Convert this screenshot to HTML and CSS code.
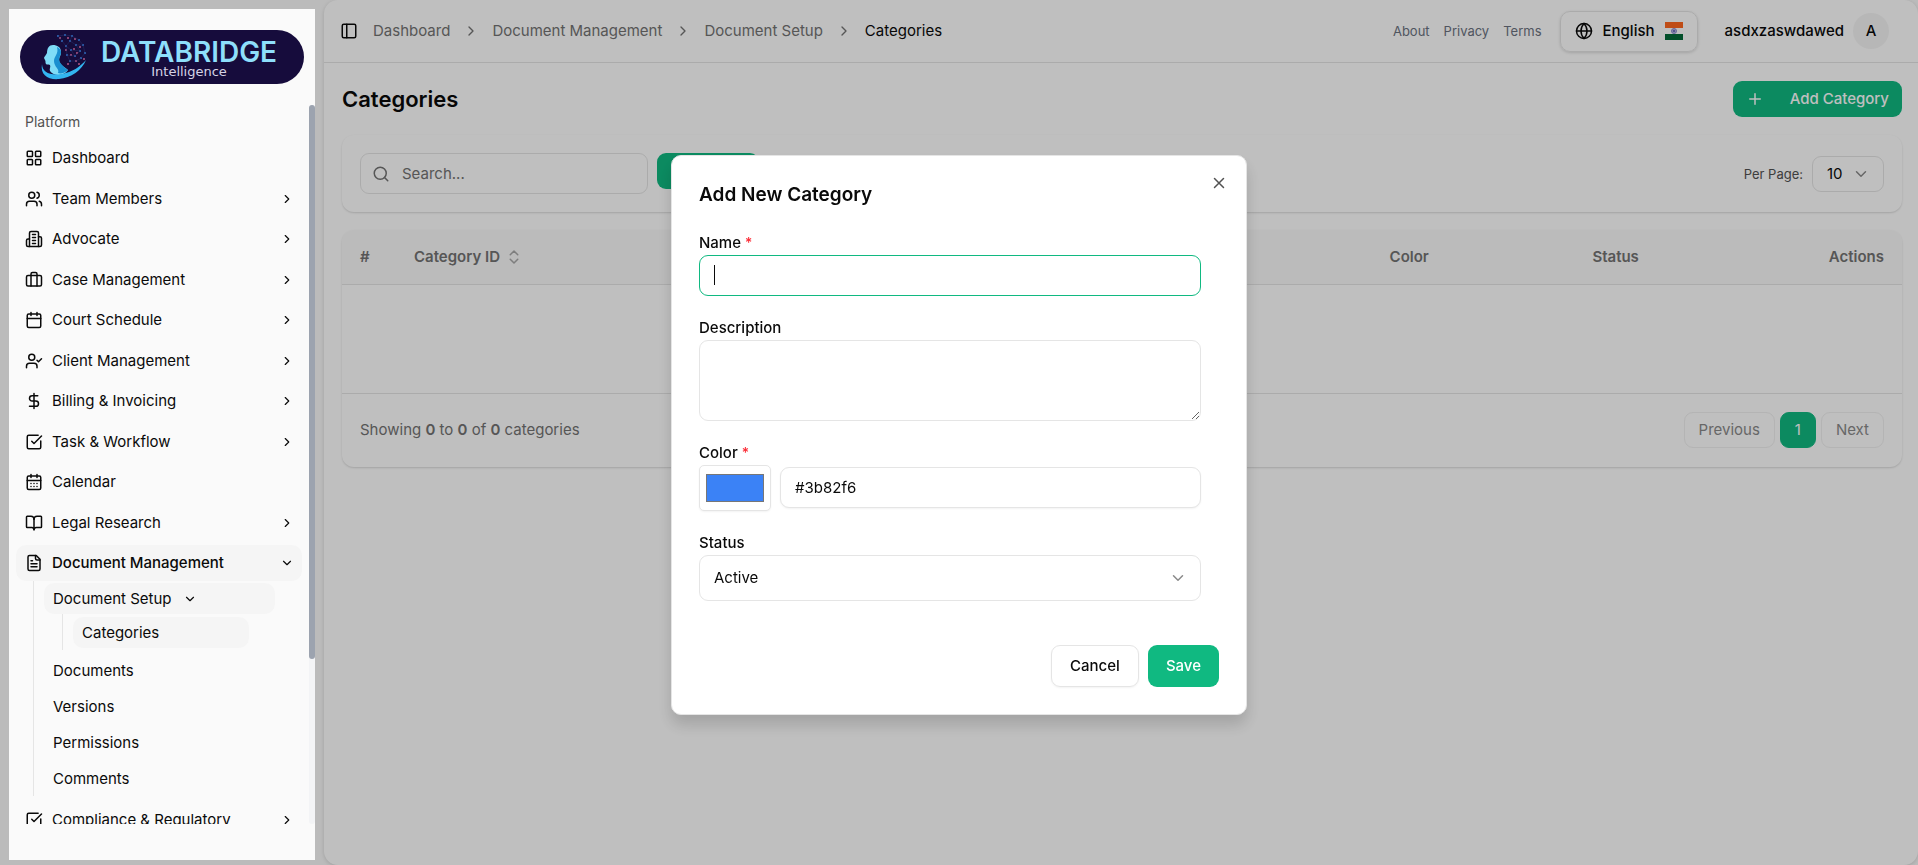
FILE: index.html
```
<!DOCTYPE html>
<html lang="en">
<head>
    <meta charset="UTF-8">
    <meta name="viewport" content="width=device-width, initial-scale=1.0">
    <title>Categories</title>
    <link rel="stylesheet" href="styles.css">
</head>
<body>
    <!-- Icon set -->
    <svg class="sprite" aria-hidden="true">
        <symbol id="i-grid" viewBox="0 0 24 24"><rect x="3" y="3" width="7" height="7" rx="1"/><rect x="14" y="3" width="7" height="7" rx="1"/><rect x="14" y="14" width="7" height="7" rx="1"/><rect x="3" y="14" width="7" height="7" rx="1"/></symbol>
        <symbol id="i-users" viewBox="0 0 24 24"><path d="M16 21v-2a4 4 0 0 0-4-4H6a4 4 0 0 0-4 4v2"/><circle cx="9" cy="7" r="4"/><path d="M22 21v-2a4 4 0 0 0-3-3.87M16 3.13a4 4 0 0 1 0 7.75"/></symbol>
        <symbol id="i-building" viewBox="0 0 24 24"><path d="M6 22V4a2 2 0 0 1 2-2h8a2 2 0 0 1 2 2v18Z"/><path d="M6 12H4a2 2 0 0 0-2 2v6a2 2 0 0 0 2 2h2"/><path d="M18 9h2a2 2 0 0 1 2 2v9a2 2 0 0 1-2 2h-2"/><path d="M10 6h4M10 10h4M10 14h4M10 18h4"/></symbol>
        <symbol id="i-case" viewBox="0 0 24 24"><path d="M16 20V4a2 2 0 0 0-2-2h-4a2 2 0 0 0-2 2v16"/><rect x="2" y="6" width="20" height="14" rx="2"/></symbol>
        <symbol id="i-calendar" viewBox="0 0 24 24"><path d="M8 2v4M16 2v4M3 10h18"/><rect x="3" y="4" width="18" height="18" rx="2"/></symbol>
        <symbol id="i-user-check" viewBox="0 0 24 24"><path d="m16 11 2 2 4-4"/><path d="M16 21v-2a4 4 0 0 0-4-4H6a4 4 0 0 0-4 4v2"/><circle cx="9" cy="7" r="4"/></symbol>
        <symbol id="i-dollar" viewBox="0 0 24 24"><path d="M12 2v20M17 5H9.5a3.5 3.5 0 0 0 0 7h5a3.5 3.5 0 0 1 0 7H6"/></symbol>
        <symbol id="i-check" viewBox="0 0 24 24"><path d="M21 10.5V19a2 2 0 0 1-2 2H5a2 2 0 0 1-2-2V5a2 2 0 0 1 2-2h12.5"/><path d="m9 11 3 3L22 4"/></symbol>
        <symbol id="i-days" viewBox="0 0 24 24"><path d="M8 2v4M16 2v4M3 10h18"/><rect x="3" y="4" width="18" height="18" rx="2"/><path d="M8 14h.01M12 14h.01M16 14h.01M8 18h.01M12 18h.01M16 18h.01"/></symbol>
        <symbol id="i-book" viewBox="0 0 24 24"><path d="M12 7v14"/><path d="M3 18a1 1 0 0 1-1-1V4a1 1 0 0 1 1-1h5a4 4 0 0 1 4 4 4 4 0 0 1 4-4h5a1 1 0 0 1 1 1v13a1 1 0 0 1-1 1h-6a3 3 0 0 0-3 3 3 3 0 0 0-3-3z"/></symbol>
        <symbol id="i-file" viewBox="0 0 24 24"><path d="M15 2H6a2 2 0 0 0-2 2v16a2 2 0 0 0 2 2h12a2 2 0 0 0 2-2V7Z"/><path d="M14 2v4a2 2 0 0 0 2 2h4M10 9H8M16 13H8M16 17H8"/></symbol>
        <symbol id="i-right" viewBox="0 0 24 24"><path d="m9 18 6-6-6-6"/></symbol>
        <symbol id="i-down" viewBox="0 0 24 24"><path d="m6 9 6 6 6-6"/></symbol>
        <symbol id="i-sort" viewBox="0 0 24 24"><path d="m7 15 5 5 5-5M7 9l5-5 5 5"/></symbol>
        <symbol id="i-panel" viewBox="0 0 24 24"><rect x="3" y="3" width="18" height="18" rx="2"/><path d="M9 3v18"/></symbol>
        <symbol id="i-globe" viewBox="0 0 24 24"><circle cx="12" cy="12" r="10"/><path d="M12 2a14.5 14.5 0 0 0 0 20 14.5 14.5 0 0 0 0-20M2 12h20"/></symbol>
        <symbol id="i-plus" viewBox="0 0 24 24"><path d="M5 12h14M12 5v14"/></symbol>
        <symbol id="i-search" viewBox="0 0 24 24"><circle cx="11" cy="11" r="8"/><path d="m21 21-4.3-4.3"/></symbol>
        <symbol id="i-close" viewBox="0 0 24 24"><path d="M18 6 6 18M6 6l12 12"/></symbol>
    </svg>

    <div class="layout">
        <aside class="sidebar">
            <a href="#" class="logo" aria-label="Databridge Intelligence">
                <svg class="logo-mark" viewBox="0 0 48 48">
                    <g fill="#2f6fc4">
                        <circle cx="18" cy="3" r="1"/><circle cx="25" cy="2" r="1"/><circle cx="32" cy="3" r="1"/><circle cx="39" cy="7" r="1"/>
                        <circle cx="22" cy="8" r="1"/><circle cx="30" cy="8" r="1"/><circle cx="36" cy="12" r="1"/><circle cx="43" cy="12" r="1"/>
                        <circle cx="26" cy="13" r="1"/><circle cx="31" cy="17" r="1"/><circle cx="40" cy="18" r="1"/><circle cx="45" cy="20" r="1"/>
                        <circle cx="27" cy="22" r="1"/><circle cx="35" cy="23" r="1"/><circle cx="41" cy="25" r="1"/><circle cx="30" cy="28" r="1"/>
                    </g>
                    <g fill="#b05584">
                        <circle cx="20" cy="5" r="1"/><circle cx="28" cy="5" r="1"/><circle cx="35" cy="6" r="1"/><circle cx="40" cy="14" r="1"/>
                        <circle cx="26" cy="17" r="1"/><circle cx="34" cy="16" r="1"/><circle cx="37" cy="20" r="1"/><circle cx="31" cy="22" r="1"/>
                        <circle cx="44" cy="26" r="1"/><circle cx="36" cy="28" r="1"/><circle cx="28" cy="31" r="1"/><circle cx="39" cy="31" r="1"/>
                    </g>
                    <path stroke="#2a3a76" stroke-width="0.4" fill="none" d="M18 3l7-1 7 1 7 4 4 5 2 8-4 5-5 3-6 0-3-6-1-9 4-5 6 4 4 6-5 5-4-6-5-4-4-5zM30 8l2-5M36 12l7 0M31 17l9 1M27 22l8 1"/>
                    <path fill="#7fdcf7" d="M13 12c4 0 8 2 8 7 0 4-2 5-2 8 0 4 4 6 9 10-4 6-14 7-18 1-1-2 1-4 0-6-2-1-3 0-4-1s0-3-1-4l-1-2c0-1 2-3 3-5 0-5 2-8 6-8z"/>
                    <path fill="#1a8fd0" d="M17 14c4 2 5 5 3 9-2 5 0 8 8 14-3 3-7 4-10 3 2-4-4-6-4-12 0-5 5-7 3-14z"/>
                    <path fill="#33b5f0" d="M2 31c0 8 8 12 20 10 10-2 18-7 24-14-4 10-15 18-27 19C8 47 0 42 2 31z"/>
                </svg>
                <span class="logo-text">
                    <span class="logo-name">DATABRIDGE</span>
                    <span class="logo-sub">Intelligence</span>
                </span>
            </a>

            <div class="sidebar-body">
                <nav class="menu">
                    <p class="menu-title">Platform</p>
                    <div class="menu-group">
                        <a href="#" class="menu-item"><svg class="icon"><use href="#i-grid"/></svg>Dashboard</a>
                        <a href="#" class="menu-item"><svg class="icon"><use href="#i-users"/></svg>Team Members<svg class="chevron"><use href="#i-right"/></svg></a>
                        <a href="#" class="menu-item"><svg class="icon"><use href="#i-building"/></svg>Advocate<svg class="chevron"><use href="#i-right"/></svg></a>
                        <a href="#" class="menu-item"><svg class="icon"><use href="#i-case"/></svg>Case Management<svg class="chevron"><use href="#i-right"/></svg></a>
                        <a href="#" class="menu-item"><svg class="icon"><use href="#i-calendar"/></svg>Court Schedule<svg class="chevron"><use href="#i-right"/></svg></a>
                        <a href="#" class="menu-item"><svg class="icon"><use href="#i-user-check"/></svg>Client Management<svg class="chevron"><use href="#i-right"/></svg></a>
                        <a href="#" class="menu-item"><svg class="icon"><use href="#i-dollar"/></svg>Billing &amp; Invoicing<svg class="chevron"><use href="#i-right"/></svg></a>
                        <a href="#" class="menu-item"><svg class="icon"><use href="#i-check"/></svg>Task &amp; Workflow<svg class="chevron"><use href="#i-right"/></svg></a>
                        <a href="#" class="menu-item"><svg class="icon"><use href="#i-days"/></svg>Calendar</a>
                        <a href="#" class="menu-item"><svg class="icon"><use href="#i-book"/></svg>Legal Research<svg class="chevron"><use href="#i-right"/></svg></a>
                        <a href="#" class="menu-item active"><svg class="icon"><use href="#i-file"/></svg>Document Management<svg class="chevron"><use href="#i-down"/></svg></a>
                    </div>
                    <div class="submenu">
                        <a href="#" class="sub-item active">Document Setup<svg class="chevron"><use href="#i-down"/></svg></a>
                        <div class="submenu nested">
                            <a href="#" class="sub-item active">Categories</a>
                        </div>
                        <a href="#" class="sub-item">Documents</a>
                        <a href="#" class="sub-item">Versions</a>
                        <a href="#" class="sub-item">Permissions</a>
                        <a href="#" class="sub-item">Comments</a>
                    </div>
                    <a href="#" class="menu-item"><svg class="icon"><use href="#i-check"/></svg>Compliance &amp; Regulatory<svg class="chevron"><use href="#i-right"/></svg></a>
                </nav>
                <div class="scrollbar"><div class="scroll-thumb"></div></div>
            </div>
        </aside>

        <main class="main">
            <header class="topbar">
                <button class="icon-btn" aria-label="Toggle sidebar"><svg class="icon"><use href="#i-panel"/></svg></button>
                <nav class="breadcrumb">
                    <a href="#">Dashboard</a>
                    <svg class="chevron"><use href="#i-right"/></svg>
                    <a href="#">Document Management</a>
                    <svg class="chevron"><use href="#i-right"/></svg>
                    <a href="#">Document Setup</a>
                    <svg class="chevron"><use href="#i-right"/></svg>
                    <span class="current">Categories</span>
                </nav>
                <nav class="top-links">
                    <a href="#">About</a>
                    <a href="#">Privacy</a>
                    <a href="#">Terms</a>
                </nav>
                <button class="lang-btn">
                    <svg class="icon"><use href="#i-globe"/></svg>
                    English
                    <svg class="flag" viewBox="0 0 18 18"><rect width="18" height="6" fill="#ff671f"/><rect y="6" width="18" height="6" fill="#fff"/><rect y="12" width="18" height="6" fill="#046a38"/><circle cx="9" cy="9" r="2.5" fill="#b9b9e6" stroke="#8a8ad0" stroke-width="1"/><circle cx="9" cy="9" r="1" fill="#5a5ab0"/></svg>
                </button>
                <button class="user-btn">asdxzaswdawed<span class="avatar">A</span></button>
            </header>

            <div class="content">
                <div class="page-head">
                    <h1>Categories</h1>
                    <button class="btn primary add-btn"><svg class="icon"><use href="#i-plus"/></svg>Add Category</button>
                </div>

                <div class="card filters">
                    <div class="search-box">
                        <svg class="icon"><use href="#i-search"/></svg>
                        <input type="text" placeholder="Search..." aria-label="Search">
                    </div>
                    <button class="btn primary search-btn"><svg class="icon"><use href="#i-search"/></svg>Search</button>
                    <label class="per-page" for="per-page">Per Page:</label>
                    <div class="select small">
                        <select id="per-page"><option>10</option></select>
                        <svg class="icon"><use href="#i-down"/></svg>
                    </div>
                </div>

                <div class="card">
                    <table class="table">
                        <thead>
                            <tr>
                                <th class="col-num">#</th>
                                <th><span class="sortable">Category ID<svg class="icon"><use href="#i-sort"/></svg></span></th>
                                <th class="col-color">Color</th>
                                <th class="col-status">Status</th>
                                <th class="col-actions">Actions</th>
                            </tr>
                        </thead>
                        <tbody>
                            <tr><td colspan="5"></td></tr>
                        </tbody>
                    </table>
                    <div class="table-foot">
                        <p>Showing <b>0</b> to <b>0</b> of <b>0</b> categories</p>
                        <div class="pager">
                            <button class="page-btn" disabled>Previous</button>
                            <button class="page-btn current">1</button>
                            <button class="page-btn" disabled>Next</button>
                        </div>
                    </div>
                </div>
            </div>
        </main>
    </div>

    <div class="overlay">
        <div class="modal" role="dialog" aria-labelledby="modal-title">
            <button class="close-btn" aria-label="Close"><svg class="icon"><use href="#i-close"/></svg></button>
            <h2 id="modal-title">Add New Category</h2>
            <form class="form">
                <div class="field">
                    <label for="name">Name <span class="req">*</span></label>
                    <div class="focused"><input type="text" id="name" class="input"></div>
                </div>
                <div class="field">
                    <label for="description">Description</label>
                    <textarea id="description" class="input"></textarea>
                </div>
                <div class="field">
                    <label for="color">Color <span class="req">*</span></label>
                    <div class="color-row">
                        <input type="color" id="color" class="swatch" value="#3b82f6">
                        <input type="text" class="input" value="#3b82f6" aria-label="Color code">
                    </div>
                </div>
                <div class="field">
                    <label for="status">Status</label>
                    <div class="select">
                        <select id="status"><option>Active</option></select>
                        <svg class="icon"><use href="#i-down"/></svg>
                    </div>
                </div>
            </form>
            <div class="modal-foot">
                <button class="btn outline">Cancel</button>
                <button class="btn primary">Save</button>
            </div>
        </div>
    </div>
</body>
</html>
```

FILE: styles.css
```
* {
    box-sizing: border-box;
}
body {
    margin: 0;
    font-family: Inter, "Liberation Sans", sans-serif;
    font-size: 15px;
    line-height: 24px;
    color: #0a0a0a;
    background-color: #fafafa;
    overflow: hidden;
}
a {
    color: inherit;
    text-decoration: none;
}
button, input, textarea, select {
    font: inherit;
    color: inherit;
}
button {
    display: flex;
    align-items: center;
    justify-content: center;
    background: none;
    border: none;
    padding: 0;
    cursor: pointer;
}
h1, h2, p {
    margin: 0;
}
.sprite {
    display: none;
}
.icon, .chevron {
    width: 18px;
    height: 18px;
    flex-shrink: 0;
    fill: none;
    stroke: currentColor;
    stroke-width: 2;
    stroke-linecap: round;
    stroke-linejoin: round;
}
.chevron {
    width: 16px;
    height: 16px;
}

.layout {
    display: flex;
    height: 100vh;
}

/* Sidebar */
.sidebar {
    position: relative;
    z-index: 20;
    width: 306px;
    flex-shrink: 0;
    display: flex;
    flex-direction: column;
    margin: 9px 9px 5px 9px;
    background-color: #fafafa;
}
.logo {
    display: flex;
    align-items: center;
    gap: 13px;
    height: 54px;
    margin: 21px 11px;
    padding-left: 20px;
    border-radius: 27px;
    background-color: #160c3c;
}
.logo-mark {
    width: 48px;
    height: 50px;
}
.logo-text {
    display: flex;
    flex-direction: column;
    align-items: center;
    padding-top: 4px;
}
.logo-name {
    font-size: 28px;
    font-weight: 600;
    line-height: 26px;
    color: #8edffb;
}
.logo-sub {
    font-family: "DejaVu Sans", sans-serif;
    font-size: 13px;
    line-height: 14px;
    color: #d5d3e6;
}
.sidebar-body {
    display: flex;
    flex: 1;
    min-height: 0;
    margin-bottom: 36px;
}
.menu {
    flex: 1;
    overflow: hidden;
    padding: 0 7px;
}
.menu-title {
    padding: 5px 9px 6px;
    font-size: 14px;
    color: #525252;
}
.menu-group {
    display: flex;
    flex-direction: column;
    justify-content: space-between;
    height: 441px;
}
.menu-item {
    display: flex;
    align-items: center;
    gap: 9px;
    height: 36px;
    padding: 0 8px 0 9px;
    border-radius: 10px;
}
.menu-item .chevron, .sub-item .chevron {
    width: 14px;
    height: 14px;
}
.menu-item .chevron {
    margin-left: auto;
}
.menu-item.active {
    font-weight: 500;
    background-color: #f5f5f5;
}
.submenu {
    display: flex;
    flex-direction: column;
    gap: 5px;
    margin: 0 27px 6px 17px;
    padding: 2px 0 2px 10px;
    border-left: 1px solid #e5e5e5;
}
.submenu.nested {
    margin: -5px 26px 0 18px;
    padding: 3px 0 2px 10px;
}
.sub-item {
    display: flex;
    align-items: center;
    gap: 12px;
    height: 31px;
    padding: 0 9px;
    border-radius: 10px;
}
.sub-item.active {
    background-color: #f5f5f5;
}
.scrollbar {
    width: 6px;
    border-radius: 3px;
    background-color: #f3f4f6;
}
.scroll-thumb {
    width: 6px;
    height: 77%;
    border-radius: 3px;
    background-color: #9ca3af;
}

/* Main panel */
.main {
    flex: 1;
    min-width: 0;
    border-radius: 14px;
    background-color: #fff;
    box-shadow: 0 1px 4px rgba(0, 0, 0, 0.15);
}
.topbar {
    display: flex;
    align-items: center;
    height: 63px;
    padding: 0 29px 0 16px;
    border-bottom: 1px solid #e5e5e5;
}
.breadcrumb {
    display: flex;
    align-items: center;
    gap: 13px;
    margin-left: 15px;
    margin-right: auto;
    color: #737373;
}
.breadcrumb .current {
    color: #0a0a0a;
}
.top-links {
    display: flex;
    gap: 14px;
    font-size: 13px;
    color: #6b7280;
}
.lang-btn {
    gap: 10px;
    height: 41px;
    margin: 0 27px 0 18px;
    padding: 0 14px;
    border: 1px solid #e5e5e5;
    border-radius: 10px;
    font-weight: 500;
    box-shadow: 0 1px 3px rgba(0, 0, 0, 0.15);
}
.flag {
    width: 18px;
    height: 18px;
}
.user-btn {
    gap: 9px;
    font-weight: 500;
}
.avatar {
    width: 36px;
    line-height: 36px;
    border-radius: 50%;
    background-color: #f5f5f5;
}
.content {
    display: flex;
    flex-direction: column;
    gap: 18px;
    padding: 18px 16px 0 18px;
}
.page-head {
    display: flex;
    align-items: center;
    justify-content: space-between;
}
.page-head h1 {
    font-size: 22px;
    font-weight: 600;
}
.btn {
    height: 42px;
    padding: 0 18px;
    border-radius: 9px;
    font-weight: 500;
}
.btn.primary {
    color: #fff;
    background-color: #10b981;
}
.btn.outline {
    border: 1px solid #e5e5e5;
    box-shadow: 0 1px 2px rgba(0, 0, 0, 0.05);
}
.add-btn {
    height: 36px;
    gap: 26px;
    padding: 0 13px;
}
.card {
    border-radius: 12px;
    overflow: hidden;
    box-shadow: 0 1px 2px rgba(0, 0, 0, 0.15);
}
.filters {
    display: flex;
    align-items: center;
    height: 77px;
    padding: 0 18px;
}
.search-box {
    display: flex;
    align-items: center;
    gap: 12px;
    width: 288px;
    height: 41px;
    padding: 0 11px;
    border: 1px solid #e5e5e5;
    border-radius: 9px;
    color: #737373;
}
.search-box input {
    width: 100%;
    padding: 0;
    border: none;
    outline: none;
    background: none;
}
.search-box input::placeholder {
    color: #737373;
}
.search-btn {
    align-self: flex-start;
    height: 36px;
    margin-top: 18px;
    margin-left: 9px;
    padding: 0 13px;
    gap: 8px;
}
.per-page {
    margin-left: auto;
    margin-right: 9px;
    font-size: 13px;
    color: #525252;
}
.select {
    position: relative;
    display: flex;
    align-items: center;
}
.select select {
    width: 100%;
    height: 46px;
    padding: 0 14px;
    border: 1px solid #e5e5e5;
    border-radius: 9px;
    background: none;
    appearance: none;
}
.select .icon {
    position: absolute;
    right: 14px;
    color: #8a8a8a;
    pointer-events: none;
}
.select.small select {
    width: 72px;
    height: 36px;
}

/* Table */
.table {
    width: 100%;
    table-layout: fixed;
    border-collapse: collapse;
}
.table th {
    height: 54px;
    padding: 0 18px;
    font-weight: 600;
    text-align: left;
    color: #737373;
    background-color: #fafafa;
    border-bottom: 1px solid #e5e5e5;
}
.table td {
    height: 109px;
    border-bottom: 1px solid #e5e5e5;
}
.table .col-num {
    width: 54px;
}
.table .col-color {
    width: 13%;
}
.table .col-status {
    width: 11%;
}
.table .col-actions {
    width: 10%;
    text-align: right;
}
.sortable {
    display: flex;
    align-items: center;
    gap: 5px;
}
.sortable .icon {
    opacity: 0.6;
}
.table-foot {
    display: flex;
    align-items: center;
    justify-content: space-between;
    height: 73px;
    padding: 0 18px;
    color: #737373;
}
.table-foot b {
    font-weight: 600;
}
.pager {
    display: flex;
    gap: 5px;
}
.page-btn {
    min-width: 36px;
    height: 36px;
    padding: 0 14px;
    border: 1px solid #f0f0f0;
    border-radius: 9px;
    color: #8a8a8a;
}
.page-btn.current {
    padding: 0;
    border-color: #10b981;
    color: #fff;
    background-color: #10b981;
}

/* Modal */
.overlay {
    position: fixed;
    inset: 0;
    z-index: 10;
    display: flex;
    align-items: center;
    justify-content: center;
    background-color: rgba(0, 0, 0, 0.25);
}
.modal {
    position: relative;
    width: 576px;
    margin-top: 4px;
    padding: 27px;
    border: 1px solid #e5e5e5;
    border-radius: 10px;
    background-color: #fff;
    box-shadow: 0 10px 15px rgba(0, 0, 0, 0.15);
}
.modal h2 {
    font-size: 19px;
    font-weight: 600;
}
.close-btn {
    position: absolute;
    top: 18px;
    right: 18px;
    color: #525252;
}
.form {
    display: flex;
    flex-direction: column;
    gap: 20px;
    padding: 24px 18px 0 0;
}
.field label {
    display: block;
    font-weight: 500;
}
.req {
    color: #fb2c36;
    font-size: 14px;
}
.input {
    display: block;
    width: 100%;
    height: 41px;
    padding: 0 14px;
    border: 1px solid #e5e5e5;
    border-radius: 9px;
    outline: none;
    background-color: #fff;
}
textarea.input {
    height: 81px;
    resize: vertical;
}
.focused {
    position: relative;
}
.focused .input {
    border-color: #10b981;
    caret-color: transparent;
}
.focused::after {
    content: "";
    position: absolute;
    top: 10px;
    left: 15px;
    width: 1px;
    height: 20px;
    background-color: #0a0a0a;
}
.color-row {
    display: flex;
    align-items: center;
    gap: 9px;
}
.color-row .input {
    box-shadow: 0 1px 2px rgba(0, 0, 0, 0.05);
}
.swatch {
    width: 72px;
    height: 46px;
    flex-shrink: 0;
    padding: 4px;
    border: 1px solid #e5e5e5;
    border-radius: 5px;
    background-color: #fff;
    box-shadow: 0 1px 2px rgba(0, 0, 0, 0.05);
}
.modal-foot {
    display: flex;
    justify-content: flex-end;
    gap: 9px;
    margin-top: 44px;
}
```
